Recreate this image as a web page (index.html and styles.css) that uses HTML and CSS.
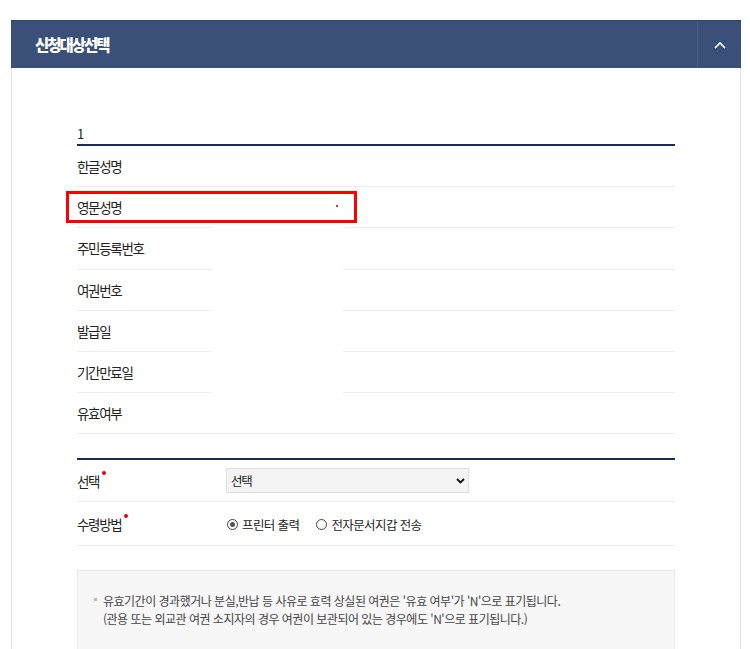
FILE: index.html
```html
<!DOCTYPE html>
<html lang="ko">
<head>
  <meta charset="UTF-8">
  <title>신청대상선택</title>
  <link rel="stylesheet" href="styles.css">
</head>
<body>
  <div class="panel">
    <div class="panel-head">
      <h2 class="panel-title">신청대상선택</h2>
      <button class="panel-toggle" type="button">
        <svg width="12" height="8" viewBox="0 0 12 8"><path d="M1 7 L6 2 L11 7" fill="none" stroke="#fff" stroke-width="1.6"/></svg>
      </button>
    </div>

    <div class="panel-body">
      <div class="person">
        <div class="person-no">1</div>
        <div class="info-row">
          <div class="info-label">한글성명</div>
        </div>
        <div class="info-row split marked">
          <div class="info-label">영문성명</div>
          <div class="info-gap"></div>
          <div class="info-value"></div>
          <div class="mark-box"><span class="mark-dot"></span></div>
        </div>
        <div class="info-row split">
          <div class="info-label">주민등록번호</div>
          <div class="info-gap"></div>
          <div class="info-value"></div>
        </div>
        <div class="info-row split">
          <div class="info-label">여권번호</div>
          <div class="info-gap"></div>
          <div class="info-value"></div>
        </div>
        <div class="info-row split">
          <div class="info-label">발급일</div>
          <div class="info-gap"></div>
          <div class="info-value"></div>
        </div>
        <div class="info-row split">
          <div class="info-label">기간만료일</div>
          <div class="info-gap"></div>
          <div class="info-value"></div>
        </div>
        <div class="info-row">
          <div class="info-label">유효여부</div>
        </div>
      </div>

      <div class="form-table">
        <div class="form-row">
          <div class="form-label">선택<span class="req"></span></div>
          <div class="form-field">
            <div class="select-wrap">
              <select class="select">
                <option>선택</option>
              </select>
              <svg class="select-arrow" width="9" height="6" viewBox="0 0 9 6"><path d="M1 1 L4.5 4.5 L8 1" fill="none" stroke="#111" stroke-width="1.8"/></svg>
            </div>
          </div>
        </div>
        <div class="form-row tall">
          <div class="form-label">수령방법<span class="req"></span></div>
          <div class="form-field radios">
            <label class="radio checked"><span class="radio-dot"></span>프린터 출력</label>
            <label class="radio"><span class="radio-dot"></span>전자문서지갑 전송</label>
          </div>
        </div>
      </div>

      <div class="notice">
        <p class="notice-item">유효기간이 경과했거나 분실,반납 등 사유로 효력 상실된 여권은 '유효 여부'가 'N'으로 표기됩니다.<br>(관용 또는 외교관 여권 소지자의 경우 여권이 보관되어 있는 경우에도 'N'으로 표기됩니다.)</p>
      </div>
    </div>
  </div>
</body>
</html>
```

FILE: styles.css
```css
*,
*::before,
*::after {
  box-sizing: border-box;
}
html, body {
  margin: 0;
  background: #fff;
  font-family: 'Noto Sans CJK KR', 'Noto Sans', sans-serif;
  color: #222;
}
.panel {
  width: 730px;
  margin: 20px 0 0 11px;
  border: 1px solid #e2e2e2;
  border-top: 0;
}
.panel-head {
  display: flex;
  align-items: stretch;
  height: 48px;
  margin: 0 -1px;
  background: #3a5078;
  border-top: 1px solid #2f4468;
}
.panel-title {
  flex: 1;
  margin: 0;
  padding-left: 24px;
  font-size: 15.5px;
  line-height: 47px;
  font-weight: 900;
  letter-spacing: -2px;
  color: #fff;
}
.panel-toggle {
  width: 44px;
  padding: 0;
  border: 0;
  border-left: 1px solid #455c84;
  background: transparent;
  display: flex;
  align-items: center;
  justify-content: center;
  cursor: pointer;
}
.panel-body {
  padding: 56px 65px 0;
}

/* 대상자 정보 */
.person-no {
  font-size: 13px;
  line-height: 20px;
  border-bottom: 2px solid #1c2b4f;
}
.info-row {
  position: relative;
  display: flex;
  height: 41.2px;
  align-items: center;
  border-bottom: 1px solid #ededed;
}
.info-row.split {
  border-bottom: 0;
}
.info-row.split .info-label {
  width: 135px;
  height: 41.2px;
  border-bottom: 1px solid #ededed;
}
.info-row.split .info-gap {
  width: 131px;
}
.info-row.split .info-value {
  flex: 1;
  align-self: stretch;
  border-bottom: 1px solid #ededed;
}
.info-label {
  display: flex;
  align-items: center;
  font-size: 13.5px;
  letter-spacing: -1.3px;
  line-height: 40px;
}
.mark-box {
  position: absolute;
  left: -11px;
  top: 4px;
  width: 291px;
  height: 32px;
  border: 3px solid #f00;
}
.mark-dot {
  position: absolute;
  left: 267px;
  top: 11px;
  width: 2px;
  height: 2px;
  background: #d33;
}

/* 선택 폼 */
.form-table {
  margin-top: 24px;
  border-top: 2px solid #1c2b4f;
}
.form-row {
  display: flex;
  align-items: center;
  height: 42px;
  border-bottom: 1px solid #ededed;
}
.form-row.tall {
  height: 44px;
}
.form-label {
  width: 149px;
  font-size: 13.5px;
  letter-spacing: -1.3px;
}
.req {
  display: inline-block;
  width: 4px;
  height: 4px;
  margin-left: 3px;
  border-radius: 50%;
  background: #e00;
  vertical-align: 12px;
}
.select-wrap {
  position: relative;
  width: 243px;
}
.select {
  display: block;
  width: 100%;
  height: 25px;
  padding: 0 0 0 4px;
  border: 1px solid #ddd;
  background: #f4f4f4;
  font-family: inherit;
  font-size: 12.5px;
  letter-spacing: -1.2px;
  color: #222;
  appearance: none;
  -webkit-appearance: none;
  border-radius: 0;
}
.select-arrow {
  position: absolute;
  right: 4px;
  top: 10px;
}
.radios {
  display: flex;
  gap: 16px;
  padding-top: 2px;
}
.radio {
  display: flex;
  align-items: center;
  font-size: 12.5px;
  letter-spacing: -0.6px;
}
.radio-dot {
  position: relative;
  width: 11px;
  height: 11px;
  margin: 0 4px 0 1px;
  border: 1px solid #444;
  border-radius: 50%;
}
.radio.checked .radio-dot::after {
  content: '';
  position: absolute;
  top: 2px;
  left: 2px;
  width: 5px;
  height: 5px;
  border-radius: 50%;
  background: #555;
}

/* 안내 */
.notice {
  margin-top: 24px;
  padding: 21px 16px 30px 16px;
  background: #f7f7f7;
  border: 1px solid #e8e8e8;
}
.notice-item {
  position: relative;
  margin: 0;
  padding-left: 9px;
  font-size: 12px;
  line-height: 18px;
  letter-spacing: -0.5px;
  color: #444;
}
.notice-item::before {
  content: '';
  position: absolute;
  left: 0;
  top: 6px;
  width: 3px;
  height: 3px;
  background: #bbb;
}
```
